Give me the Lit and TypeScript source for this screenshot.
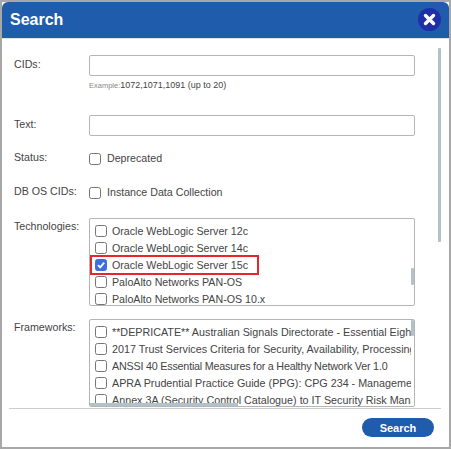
import { LitElement, html, css } from "lit";
import { customElement } from "lit/decorators.js";

const techs = [
  ["Oracle WebLogic Server 12c", false],
  ["Oracle WebLogic Server 14c", false],
  ["Oracle WebLogic Server 15c", true],
  ["PaloAlto Networks PAN-OS", false],
  ["PaloAlto Networks PAN-OS 10.x", false],
] as [string, boolean][];

const frameworks = [
  ["**DEPRICATE** Australian Signals Directorate - Essential Eight Maturity Model", false],
  ["2017 Trust Services Criteria for Security, Availability, Processing Integrity", false],
  ["ANSSI 40 Essential Measures for a Healthy Network Ver 1.0", true],
  ["APRA Prudential Practice Guide (PPG): CPG 234 - Management of Security Risk", false],
  ["Annex 3A (Security Control Catalogue) to IT Security Risk Management", false],
] as [string, boolean][];

@customElement("app-root")
export class AppRoot extends LitElement {
  static styles = css`
    :host {
      display: block;
      width: 451px;
      height: 449px;
      font-family: "Liberation Sans", Arial, sans-serif;
      color: #444;
      overflow: hidden;
    }
    * { box-sizing: border-box; }
    .dialog {
      width: 451px;
      height: 449px;
      border: 2px solid #a8a8a8;
      background: #fff;
      display: flex;
      flex-direction: column;
    }
    .head {
      height: 36px;
      flex: none;
      background: #1f5cab;
      border-radius: 6px 6px 0 0;
      display: flex;
      align-items: center;
      justify-content: space-between;
      padding: 0 8px;
      color: #fff;
      font-size: 16px;
      font-weight: 700;
    }
    .close { width: 23px; height: 23px; display: block; margin-bottom: 2px; }
    .rule-top { height: 1px; flex: none; background: #dfe3e6; }
    .body {
      position: relative;
      flex: 1;
      min-height: 0;
      padding: 16px 0 0 12px;
      display: flex;
      flex-direction: column;
    }
    .row { display: grid; grid-template-columns: 75px 326px; }
    .label { font-size: 10.67px; color: #444; line-height: 13px; }
    .lower { padding-top: 3px; }
    .low2 { padding-top: 2px; }
    .input {
      display: block;
      width: 326px;
      height: 21px;
      border: 1px solid #b5b5b5;
      border-radius: 2px;
    }
    .hint { font-size: 9px; margin-top: 3px; color: #444; line-height: 12px; }
    .hint small { font-size: 7.5px; color: #888; }
    .r-cid { height: 60px; }
    .r-text { height: 36px; }
    .r-status { height: 34px; }
    .r-db { height: 33px; }
    .r-tech { height: 101px; }
    .check {
      display: flex;
      align-items: center;
      gap: 6px;
      font-size: 10.67px;
      color: #444;
      height: 14px;
      white-space: nowrap;
    }
    .check .box { margin-top: 2px; }
    .box {
      flex: none;
      width: 12px;
      height: 12px;
      border: 1px solid #767676;
      border-radius: 2.5px;
      background: #fff;
      display: block;
    }
    .box.on { background: #3b6fe0; border-color: #3b6fe0; }
    .box svg { display: block; width: 10px; height: 10px; }
    .list {
      position: relative;
      width: 326px;
      height: 88px;
      border: 1px solid #b5b5b5;
      border-radius: 2px;
      overflow: hidden;
      padding: 3px 0 0 5px;
    }
    .item {
      position: relative;
      display: flex;
      align-items: center;
      gap: 5px;
      height: 17.2px;
      font-size: 10.67px;
      color: #444;
      white-space: nowrap;
    }
    .clip { width: 299px; overflow: hidden; font-size: 10.75px; }
    .clip.tight { letter-spacing: -0.21px; }
    .mark {
      position: absolute;
      left: -5px;
      top: -1px;
      width: 169px;
      height: 20px;
      border: 2px solid #e8262a;
    }
    .vthumb { position: absolute; right: 0; width: 3px; background: #b3c1c9; border-radius: 1px; }
    .t1 { top: 49px; height: 17px; }
    .t2 { top: 0; height: 16px; }
    .hthumb { position: absolute; left: 0; bottom: 0; width: 148px; height: 3px; background: #b3c1c9; }
    .pagebar {
      position: absolute;
      top: 9px;
      left: 436px;
      width: 3px;
      height: 194px;
      background: #b3c1c9;
      border-radius: 1px;
    }
    .foot {
      flex: none;
      margin: 0 8px 0 7px;
      height: 39px;
      border-top: 1px solid #c9cdd0;
      display: flex;
      justify-content: flex-end;
      align-items: flex-start;
      padding: 9px 7px 0 0;
    }
    .btn {
      width: 72px;
      height: 19px;
      border: 0;
      border-radius: 10px;
      background: #1f5cab;
      color: #fff;
      font: 700 11px "Liberation Sans", Arial, sans-serif;
      padding: 0;
    }
  `;

  private box(on = false) {
    return html`<span class="box ${on ? "on" : ""}">${on
      ? html`<svg viewBox="0 0 10 10"><path d="M2 5.2 4.2 7.4 8.2 2.6" fill="none" stroke="#fff" stroke-width="1.8"/></svg>`
      : ""}</span>`;
  }

  render() {
    return html`
      <div class="dialog">
        <div class="head">
          <span>Search</span>
          <svg class="close" viewBox="0 0 23 23">
            <circle cx="11.5" cy="11.5" r="11.5" fill="#1f2fa5" />
            <path d="M7.5 7.5 15.5 15.5M15.5 7.5 7.5 15.5" stroke="#fff" stroke-width="3.4" stroke-linecap="round" />
          </svg>
        </div>
        <div class="rule-top"></div>
        <div class="body">
          <div class="row r-cid">
            <div class="label lower">CIDs:</div>
            <div>
              <div class="input"></div>
              <div class="hint"><small>Example:</small>1072,1071,1091 (up to 20)</div>
            </div>
          </div>
          <div class="row r-text">
            <div class="label lower">Text:</div>
            <div class="input"></div>
          </div>
          <div class="row r-status">
            <div class="label">Status:</div>
            <div class="check">${this.box()}Deprecated</div>
          </div>
          <div class="row r-db">
            <div class="label">DB OS CIDs:</div>
            <div class="check">${this.box()}Instance Data Collection</div>
          </div>
          <div class="row r-tech">
            <div class="label low2">Technologies:</div>
            <div class="list">
              ${techs.map(
                ([t, on]) => html`<div class="item">${this.box(on)}<span>${t}</span>${on ? html`<span class="mark"></span>` : ""}</div>`
              )}
              <div class="vthumb t1"></div>
            </div>
          </div>
          <div class="row">
            <div class="label low2">Frameworks:</div>
            <div class="list">
              ${frameworks.map(
                ([t, tight]) => html`<div class="item">${this.box()}<span class="clip ${tight ? "tight" : ""}">${t}</span></div>`
              )}
              <div class="vthumb t2"></div>
              <div class="hthumb"></div>
            </div>
          </div>
          <div class="pagebar"></div>
        </div>
        <div class="foot"><button class="btn">Search</button></div>
      </div>
    `;
  }
}
